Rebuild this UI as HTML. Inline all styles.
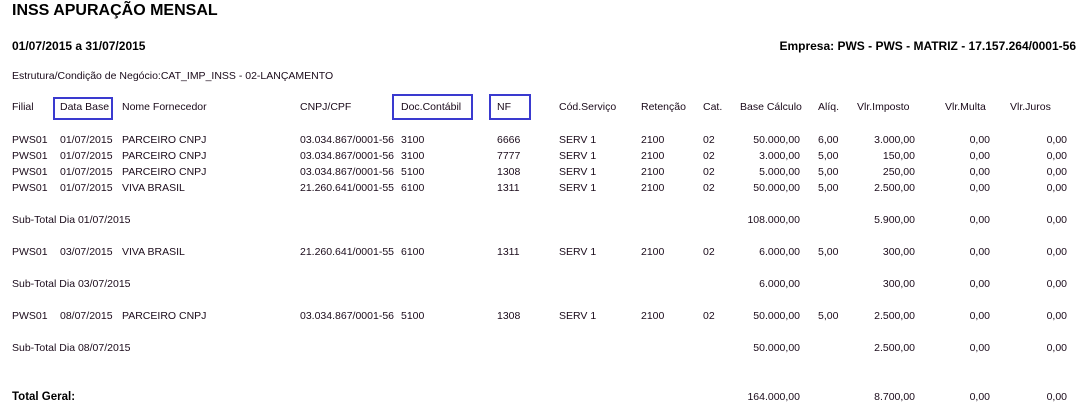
<!DOCTYPE html><html><head><meta charset="utf-8"><style>
body{margin:0;width:1077px;height:414px;background:#fff;position:relative;overflow:hidden;font-family:"Liberation Sans",sans-serif;font-size:10.5px;color:#1a0a1a}
div{position:absolute;white-space:nowrap;line-height:14px}
.r{text-align:right}
.b{font-weight:bold;color:#000}
.box{border:2px solid #3a3acf;height:19px}
</style></head><body>
<div class="b" style="left:12px;top:1px;font-size:16px;line-height:20px">INSS APURAÇÃO MENSAL</div>
<div class="b" style="left:12px;top:39px;font-size:12px">01/07/2015 a 31/07/2015</div>
<div class="b" style="right:1px;top:39px;font-size:12px">Empresa: PWS - PWS - MATRIZ - 17.157.264/0001-56</div>
<div style="left:12px;top:69px">Estrutura/Condição de Negócio:CAT_IMP_INSS - 02-LANÇAMENTO</div>
<div class="box" style="left:53px;top:97px;width:56px"></div>
<div class="box" style="left:392px;top:94px;width:77px;height:22px"></div>
<div class="box" style="left:489px;top:94px;width:38px;height:22px"></div>
<div id="c"></div>
<script>
var rows=[
[100,['Filial','Data Base','Nome Fornecedor','CNPJ/CPF','Doc.Contábil','NF','Cód.Serviço','Retenção','Cat.'],['Base Cálculo','Alíq.','Vlr.Imposto','Vlr.Multa','Vlr.Juros'],1],
[133,['PWS01','01/07/2015','PARCEIRO CNPJ','03.034.867/0001-56','3100','6666','SERV 1','2100','02'],['50.000,00','6,00','3.000,00','0,00','0,00']],
[149,['PWS01','01/07/2015','PARCEIRO CNPJ','03.034.867/0001-56','3100','7777','SERV 1','2100','02'],['3.000,00','5,00','150,00','0,00','0,00']],
[165,['PWS01','01/07/2015','PARCEIRO CNPJ','03.034.867/0001-56','5100','1308','SERV 1','2100','02'],['5.000,00','5,00','250,00','0,00','0,00']],
[181,['PWS01','01/07/2015','VIVA BRASIL','21.260.641/0001-55','6100','1311','SERV 1','2100','02'],['50.000,00','5,00','2.500,00','0,00','0,00']],
[213,['Sub-Total Dia 01/07/2015'],['108.000,00','','5.900,00','0,00','0,00']],
[245,['PWS01','03/07/2015','VIVA BRASIL','21.260.641/0001-55','6100','1311','SERV 1','2100','02'],['6.000,00','5,00','300,00','0,00','0,00']],
[277,['Sub-Total Dia 03/07/2015'],['6.000,00','','300,00','0,00','0,00']],
[309,['PWS01','08/07/2015','PARCEIRO CNPJ','03.034.867/0001-56','5100','1308','SERV 1','2100','02'],['50.000,00','5,00','2.500,00','0,00','0,00']],
[341,['Sub-Total Dia 08/07/2015'],['50.000,00','','2.500,00','0,00','0,00']],
[390,[],['164.000,00','','8.700,00','0,00','0,00']]
];
var L=[12,60,122,300,401,497,559,641,703];
var h='';
rows.forEach(function(r){
 r[1].forEach(function(t,i){h+='<div style="left:'+L[i]+'px;top:'+r[0]+'px">'+t+'</div>';});
 var v=r[2];
 if(r[3]){
  h+='<div style="left:740px;top:'+r[0]+'px">'+v[0]+'</div><div style="left:818px;top:'+r[0]+'px">'+v[1]+'</div><div style="left:857px;top:'+r[0]+'px">'+v[2]+'</div><div style="left:945px;top:'+r[0]+'px">'+v[3]+'</div><div style="left:1010px;top:'+r[0]+'px">'+v[4]+'</div>';
 } else {
  h+='<div class="r" style="right:277px;top:'+r[0]+'px">'+v[0]+'</div>';
  if(v[1])h+='<div style="left:818px;top:'+r[0]+'px">'+v[1]+'</div>';
  h+='<div class="r" style="right:162px;top:'+r[0]+'px">'+v[2]+'</div><div class="r" style="right:87px;top:'+r[0]+'px">'+v[3]+'</div><div class="r" style="right:10px;top:'+r[0]+'px">'+v[4]+'</div>';
 }
});
document.getElementById('c').outerHTML=h;
</script>
<div class="b" style="left:12px;top:390px;font-size:11.5px">Total Geral:</div>
</body></html>
